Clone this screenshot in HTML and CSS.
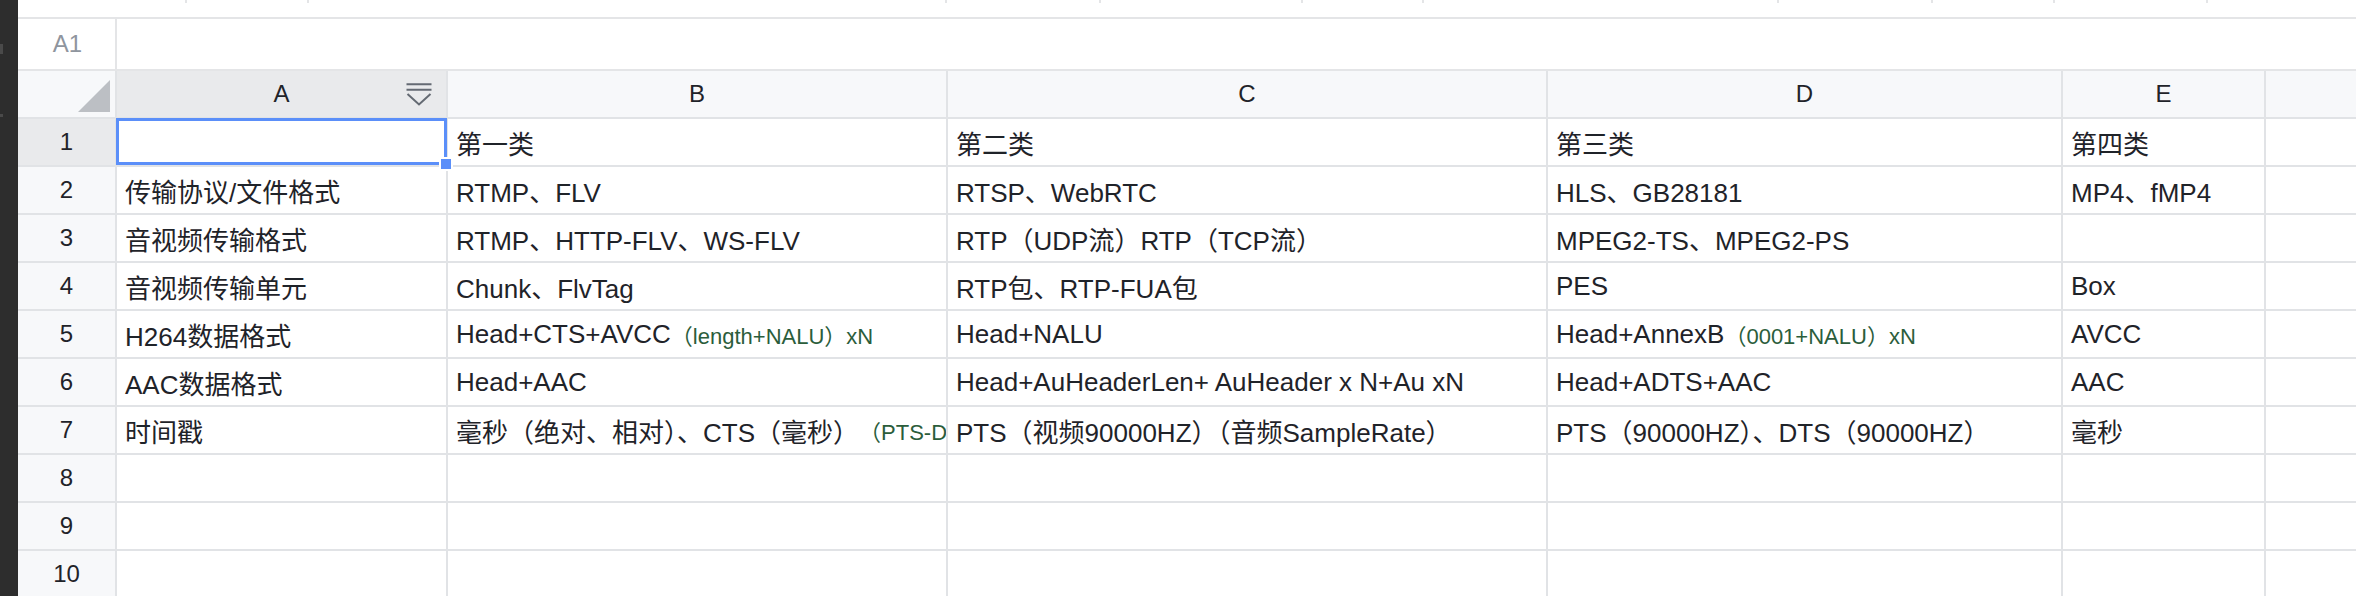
FILE: index.html
```html
<!DOCTYPE html>
<html lang="zh-CN">
<head>
<meta charset="utf-8">
<title>Sheet</title>
<link rel="stylesheet" href="styles.css">
</head>
<body>
<div class="app">
  <div class="sidebar"><span class="mark m1"></span><span class="mark m2"></span></div>
  <div class="main">
    <div class="topstrip">
      <div class="ticks"><span></span><span></span><span></span><span></span><span></span><span></span><span></span><span></span><span></span><span></span></div>
    </div>
    <div class="formula">
      <div class="namebox">A1</div>
      <div class="fx"></div>
    </div>
    <div class="sheet">
      <div class="hd corner"><svg class="tri" width="32" height="32" viewBox="0 0 32 32"><polygon points="32,0 32,32 0,32" fill="#bcbfc4"/></svg></div>
      <div class="hd col active">A<svg class="filter" width="26" height="25" viewBox="0 0 26 25"><path d="M0.5 1.2H25.5M0.5 6.8H25.5M1.5 11L13 21.5L24.5 11" fill="none" stroke="#646a73" stroke-width="2"/></svg></div>
      <div class="hd col">B</div>
      <div class="hd col">C</div>
      <div class="hd col">D</div>
      <div class="hd col">E</div>
      <div class="hd col"></div>

      <div class="hd row active">1</div>
      <div class="c a1"><div class="sel"><span class="handle"></span></div></div>
      <div class="c">第一类</div>
      <div class="c">第二类</div>
      <div class="c">第三类</div>
      <div class="c">第四类</div>
      <div class="c"></div>

      <div class="hd row">2</div>
      <div class="c">传输协议/文件格式</div>
      <div class="c">RTMP、FLV</div>
      <div class="c">RTSP、WebRTC</div>
      <div class="c">HLS、GB28181</div>
      <div class="c">MP4、fMP4</div>
      <div class="c"></div>

      <div class="hd row">3</div>
      <div class="c">音视频传输格式</div>
      <div class="c">RTMP、HTTP-FLV、WS-FLV</div>
      <div class="c">RTP（UDP流）RTP（TCP流）</div>
      <div class="c">MPEG2-TS、MPEG2-PS</div>
      <div class="c"></div>
      <div class="c"></div>

      <div class="hd row">4</div>
      <div class="c">音视频传输单元</div>
      <div class="c">Chunk、FlvTag</div>
      <div class="c">RTP包、RTP-FUA包</div>
      <div class="c">PES</div>
      <div class="c">Box</div>
      <div class="c"></div>

      <div class="hd row">5</div>
      <div class="c">H264数据格式</div>
      <div class="c">Head+CTS+AVCC<span class="note">（length+NALU）xN</span></div>
      <div class="c">Head+NALU</div>
      <div class="c">Head+AnnexB<span class="note">（0001+NALU）xN</span></div>
      <div class="c">AVCC</div>
      <div class="c"></div>

      <div class="hd row">6</div>
      <div class="c">AAC数据格式</div>
      <div class="c">Head+AAC</div>
      <div class="c">Head+AuHeaderLen+ AuHeader x N+Au xN</div>
      <div class="c">Head+ADTS+AAC</div>
      <div class="c">AAC</div>
      <div class="c"></div>

      <div class="hd row">7</div>
      <div class="c">时间戳</div>
      <div class="c">毫秒（绝对、相对）、CTS（毫秒） <span class="note">（PTS-DTS）</span></div>
      <div class="c">PTS（视频90000HZ）（音频SampleRate）</div>
      <div class="c">PTS（90000HZ）、DTS（90000HZ）</div>
      <div class="c">毫秒</div>
      <div class="c"></div>

      <div class="hd row">8</div>
      <div class="c"></div><div class="c"></div><div class="c"></div><div class="c"></div><div class="c"></div><div class="c"></div>

      <div class="hd row">9</div>
      <div class="c"></div><div class="c"></div><div class="c"></div><div class="c"></div><div class="c"></div><div class="c"></div>

      <div class="hd row">10</div>
      <div class="c"></div><div class="c"></div><div class="c"></div><div class="c"></div><div class="c"></div><div class="c"></div>
    </div>
  </div>
</div>
</body>
</html>
```

FILE: styles.css
```css
* { box-sizing: border-box; }
html, body {
  margin: 0;
  padding: 0;
  background: #ffffff;
  overflow: hidden;
}
body {
  font-family: "Liberation Sans", "Noto Sans CJK SC", sans-serif;
  color: #1f2329;
}
.app {
  display: flex;
  width: 2356px;
  height: 596px;
  overflow: hidden;
}
.sidebar {
  width: 18px;
  flex: none;
  background: #2d2d2d;
  display: flex;
  flex-direction: column;
}
.mark {
  display: block;
  width: 3px;
  background: #4a4a4a;
}
.m1 { height: 10px; margin-top: 44px; }
.m2 { height: 3px; margin-top: 60px; }
.main {
  flex: 1;
  display: flex;
  flex-direction: column;
  min-width: 0;
}
.topstrip {
  height: 19px;
  border-bottom: 2px solid #e4e5e7;
  flex: none;
}
.ticks {
  display: grid;
  grid-template-columns: 169px 122px 638px 154px 202px 121px 355px 154px 122px 153px;
  height: 3px;
}
.ticks span { border-right: 2px solid #e4e5e7; }
.formula {
  height: 52px;
  flex: none;
  display: flex;
  border-bottom: 2px solid #e4e5e7;
}
.namebox {
  width: 99px;
  border-right: 2px solid #e4e5e7;
  display: flex;
  align-items: center;
  justify-content: center;
  font-size: 24px;
  color: #8f959e;
  padding-left: 2px;
}
.fx { flex: 1; }
.sheet {
  display: grid;
  grid-template-columns: 99px 331px 500px 600px 515px 203px 200px;
  grid-auto-rows: 48px;
}
.hd, .c {
  border-right: 2px solid #e1e3e6;
  border-bottom: 2px solid #e1e3e6;
}
.hd {
  background: #f7f8fa;
  font-size: 24px;
  color: #1f2329;
  display: flex;
  align-items: center;
  justify-content: center;
}
.hd.active { background: #e9eaec; }
.col { position: relative; }
.corner {
  justify-content: flex-end;
  align-items: flex-end;
  padding: 0 5px 5px 0;
}
.tri { display: block; }
.filter {
  position: absolute;
  right: 14px;
  top: 12px;
}
.c {
  background: #ffffff;
  font-size: 26px;
  white-space: nowrap;
  overflow: hidden;
  display: flex;
  align-items: center;
  padding-left: 8px;
}
.note {
  font-size: 22px;
  color: #2b5d3b;
}
.a1 {
  position: relative;
  overflow: visible;
  z-index: 3;
}
.sel {
  position: absolute;
  top: -1px;
  left: -1px;
  right: -1px;
  bottom: 0;
  border: 3px solid #5b8ff9;
}
.handle {
  position: absolute;
  right: -9px;
  bottom: -9px;
  width: 14px;
  height: 14px;
  background: #5b8ff9;
  border: 2px solid #ffffff;
}
```
